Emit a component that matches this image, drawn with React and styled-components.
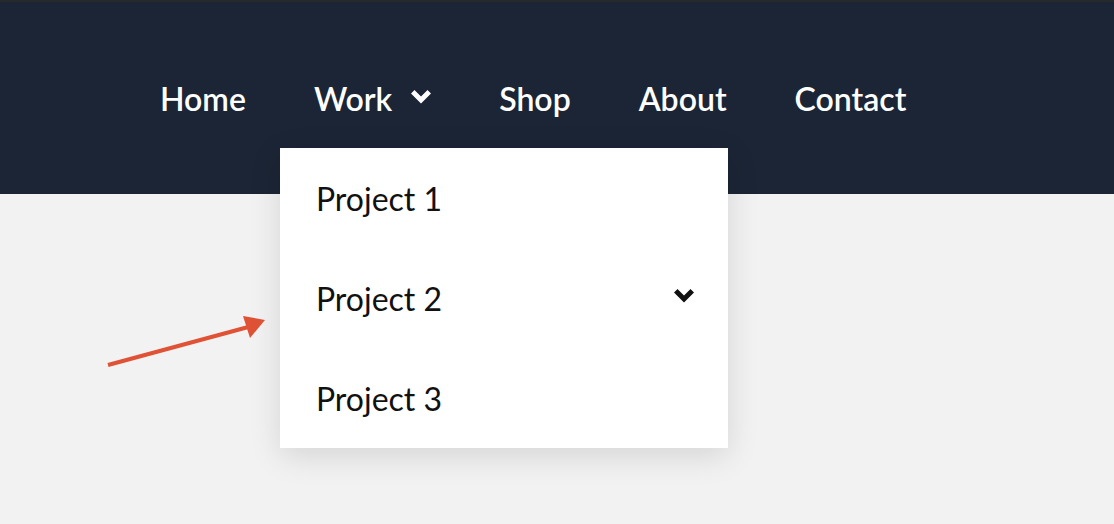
import React from 'react';
import styled, { createGlobalStyle } from 'styled-components';

const GlobalStyle = createGlobalStyle`
  html, body {
    margin: 0;
    padding: 0;
    background: #f2f2f2;
    font-family: Lato, "Open Sans", "Liberation Sans", sans-serif;
  }
`;

const Page = styled.div`
  position: relative;
  width: 1114px;
  height: 524px;
  overflow: hidden;
  background: #f2f2f2;
`;

const Header = styled.header`
  background: #1b2535;
  border-top: 2px solid #28292b;
  height: 192px;
  box-sizing: content-box;
`;

const NavList = styled.ul`
  list-style: none;
  margin: 0;
  padding: 46px 0 0 126px;
  display: flex;
`;

const NavItem = styled.li`
  position: relative;
  height: 100px;
  padding: 0 34px;
  display: flex;
  align-items: center;
  gap: 19px;
  color: #fff;
  font-size: 32px;
  font-weight: 600;
`;

const Dropdown = styled.ul`
  list-style: none;
  margin: 0;
  padding: 0;
  position: absolute;
  top: 100%;
  left: 0;
  width: 448px;
  background: #fff;
  box-shadow: 0 8px 30px rgba(0, 0, 0, 0.12);
  z-index: 2;
`;

const DropItem = styled.li`
  height: 100px;
  padding: 0 34px 0 36px;
  display: flex;
  align-items: center;
  justify-content: space-between;
  color: #111;
  font-size: 32px;
  font-weight: 400;
`;

const Chevron = styled.svg`
  display: block;
  flex: none;
  margin-top: ${(p) => p.$offset || 0}px;
`;

const Pointer = styled.svg`
  position: absolute;
  left: 100px;
  top: 310px;
`;

const Caret = ({ offset }) => (
  <Chevron $offset={offset} width="20" height="14" viewBox="0 0 20 14">
    <polygon points="0,3.5 3.5,0 10,6.5 16.5,0 20,3.5 10,13.5" fill="currentColor" />
  </Chevron>
);

const items = ['Project 1', 'Project 2', 'Project 3'];

export default function App() {
  return (
    <Page>
      <GlobalStyle />
      <Header>
        <NavList>
          <NavItem>Home</NavItem>
          <NavItem>
            Work
            <Caret offset={-2} />
            <Dropdown>
              {items.map((name) => (
                <DropItem key={name}>
                  {name}
                  {name === 'Project 2' && <Caret offset={-4} />}
                </DropItem>
              ))}
            </Dropdown>
          </NavItem>
          <NavItem>Shop</NavItem>
          <NavItem>About</NavItem>
          <NavItem>Contact</NavItem>
        </NavList>
      </Header>
      <Pointer width="180" height="70" viewBox="0 0 180 70">
        <line x1="8" y1="55" x2="152" y2="16" stroke="#e05236" strokeWidth="4" />
        <polygon points="165,10 143,6 150,28" fill="#e05236" />
      </Pointer>
    </Page>
  );
}
